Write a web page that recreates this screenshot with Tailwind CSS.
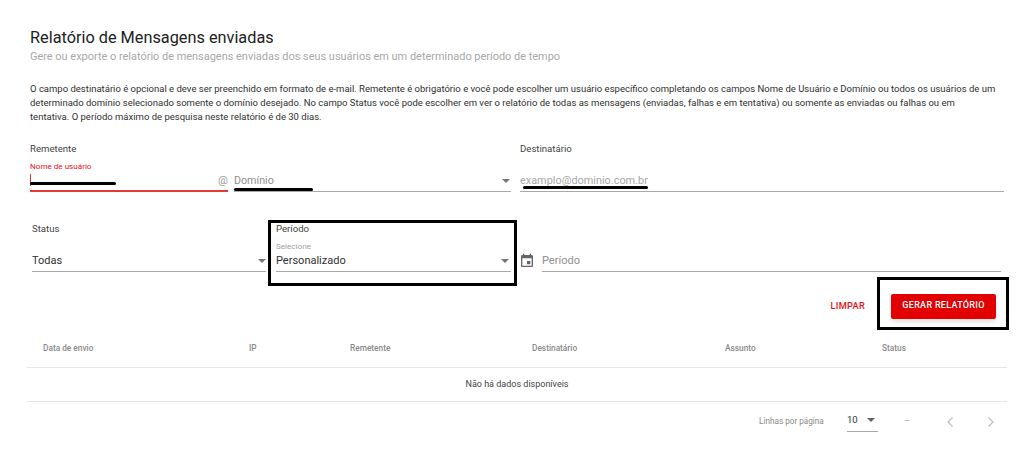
<!DOCTYPE html>
<html lang="pt-BR">
<head>
  <meta charset="UTF-8" />
  <meta name="viewport" content="width=device-width, initial-scale=1.0" />
  <title>Relatório de Mensagens enviadas</title>
  <script src="https://cdn.jsdelivr.net/npm/@tailwindcss/browser@4"></script>
</head>
<body class="bg-white text-[#212121] font-['Roboto',sans-serif] antialiased">
  <div class="relative w-[1024px] h-[450px] overflow-hidden">

    <!-- Header -->
    <div class="pl-[30px] pr-[20px] pt-[28px]">
      <h1 class="text-[16.3px] leading-[20px] text-[#212121]">Relatório de Mensagens enviadas</h1>
      <p class="text-[10.95px] leading-[18px] text-[#a8a8a8]">Gere ou exporte o relatório de mensagens enviadas dos seus usuários em um determinado período de tempo</p>
      <p class="text-[9.5px] leading-[14px] mt-[16px] text-[#303030]">O campo destinatário é opcional e deve ser preenchido em formato de e-mail. Remetente é obrigatório e você pode escolher um usuário específico completando os campos Nome de Usuário e Domínio ou todos os usuários de um determinado domínio selecionado somente o domínio desejado. No campo Status você pode escolher em ver o relatório de todas as mensagens (enviadas, falhas e em tentativa) ou somente as enviadas ou falhas ou em<br />tentativa. O período máximo de pesquisa neste relatório é de 30 dias.</p>
    </div>

    <!-- Remetente / Destinatário -->
    <div class="flex pl-[30px] mt-[17.5px]">
      <div class="w-[490px] shrink-0">
        <div class="text-[9.6px] leading-[14px] text-[#444]">Remetente</div>
        <div class="flex mt-[2px]">
          <div class="w-[198px] h-[34px] pt-[2px] border-b-2 border-[#e53935] relative">
            <div class="text-[8.1px] leading-[12px] text-[#e8101a]">Nome de usuário</div>
            <div class="w-px h-[12px] bg-[#e53935] mt-[2px]"></div>
            <span class="absolute right-0 top-[15px] text-[11px] leading-[16px] text-[#9a9a9a]">@</span>
          </div>
          <div class="w-[277px] h-[34px] ml-[6px] border-b border-[#a9a9a9] flex items-end justify-between pb-[2px]">
            <span class="text-[10.7px] leading-[16px] text-[#8f8f8f]">Domínio</span>
            <span class="w-0 h-0 mr-[1px] mb-[6px] border-x-[4px] border-x-transparent border-t-[4px] border-t-[#757575]"></span>
          </div>
        </div>
      </div>
      <div class="w-[484px] shrink-0">
        <div class="text-[9.6px] leading-[14px] text-[#444]">Destinatário</div>
        <div class="h-[34px] mt-[2px] border-b border-[#a9a9a9] flex items-end pb-[2px]">
          <span class="text-[10.9px] leading-[16px] text-[#a8a8a8]">examplo@dominio.com.br</span>
        </div>
      </div>
    </div>

    <!-- Status / Período -->
    <div class="flex pl-[32px] mt-[30px]">
      <div class="w-[234px] shrink-0">
        <div class="text-[9.6px] leading-[14px] text-[#444]">Status</div>
        <div class="h-[36px] pt-[16px] border-b border-[#a9a9a9] flex items-start justify-between">
          <span class="text-[11px] leading-[18px] text-[#303030]">Todas</span>
          <span class="w-0 h-0 mt-[7px] border-x-[4px] border-x-transparent border-t-[4px] border-t-[#757575]"></span>
        </div>
      </div>
      <div class="w-[235px] shrink-0 ml-[10px]">
        <div class="text-[9.6px] leading-[14px] text-[#444]">Período</div>
        <div class="h-[36px] border-b border-[#a9a9a9] relative flex items-start justify-between pt-[16px]">
          <span class="absolute left-0 top-[4px] text-[8.1px] leading-[12px] text-[#a0a0a0]">Selecione</span>
          <span class="text-[11px] leading-[18px] text-[#303030]">Personalizado</span>
          <span class="w-0 h-0 mt-[7px] mr-[2px] border-x-[4px] border-x-transparent border-t-[4px] border-t-[#757575]"></span>
        </div>
      </div>
      <div class="ml-[10px] flex items-end h-[50px]">
        <svg class="w-[16px] h-[16px] mb-[3px] -ml-[2px]" viewBox="0 0 24 24" fill="#666"><path d="M19 3h-1V1h-2v2H8V1H6v2H5c-1.1 0-2 .9-2 2v14c0 1.1.9 2 2 2h14c1.1 0 2-.9 2-2V5c0-1.1-.9-2-2-2zm0 16H5V8h14v11zM12 12h5v5h-5z"/></svg>
        <div class="w-[459px] ml-[7px] h-[36px] pt-[16px] border-b border-[#a9a9a9]">
          <span class="block text-[11px] leading-[18px] text-[#8f8f8f]">Período</span>
        </div>
      </div>
    </div>

    <!-- Actions -->
    <div class="flex justify-end items-center pr-[28px] mt-[22px]">
      <span class="text-[9.2px] font-medium tracking-[0.3px] text-[#e8101a]">LIMPAR</span>
      <button class="ml-[26px] w-[105px] h-[25px] rounded-[2px] bg-[#e30000] text-white text-[9px] font-medium tracking-[0.3px] shadow-md">GERAR RELATÓRIO</button>
    </div>

    <!-- Tabela -->
    <div class="ml-[27px] w-[980px] mt-[10px]">
      <div class="grid grid-cols-[206px_101px_182px_193px_157px_1fr] pl-[16px] pt-[2px] h-[39px] items-center border-b border-[#e6e6e6] text-[8.3px] font-medium text-[#8a8a8a]">
        <span>Data de envio</span>
        <span>IP</span>
        <span>Remetente</span>
        <span>Destinatário</span>
        <span>Assunto</span>
        <span>Status</span>
      </div>
      <div class="h-[34px] pt-[2px] flex items-center justify-center border-b border-[#e6e6e6] text-[9px] text-[#444]">Não há dados disponíveis</div>
    </div>

    <!-- Paginação -->
    <div class="flex items-center ml-[759px] h-[40px]">
      <span class="text-[8.2px] text-[#8a8a8a] w-[88px]">Linhas por página</span>
      <div class="w-[31px] h-[21px] border-b border-[#a9a9a9] flex items-start justify-between pt-[3px] pr-[3px]">
        <span class="text-[9.5px] leading-[12px] text-[#303030]">10</span>
        <span class="w-0 h-0 mt-[4px] border-x-[4px] border-x-transparent border-t-[4px] border-t-[#616161]"></span>
      </div>
      <span class="ml-[26px] text-[9px] text-[#a8a8a8]">–</span>
      <svg class="w-[8px] h-[12px] ml-[36px]" viewBox="0 0 8 12" fill="none" stroke="#bdbdbd" stroke-width="1.2"><path d="M6.5 1.5 2 6l4.5 4.5"/></svg>
      <svg class="w-[8px] h-[12px] ml-[33px]" viewBox="0 0 8 12" fill="none" stroke="#bdbdbd" stroke-width="1.2"><path d="M1.5 1.5 6 6l-4.5 4.5"/></svg>
    </div>

    <!-- Anotações sobre a captura -->
    <div class="absolute left-[268px] top-[220px] w-[249px] h-[66px] border-[3px] border-black"></div>
    <div class="absolute left-[877px] top-[277px] w-[132px] h-[53px] border-[3px] border-black"></div>
    <div class="absolute left-[30px] top-[182px] w-[86px] h-[3px] rounded-full bg-black"></div>
    <div class="absolute left-[234px] top-[188px] w-[79px] h-[2.5px] rounded-full bg-black"></div>
    <div class="absolute left-[523px] top-[186px] w-[125px] h-[2.5px] rounded-full bg-black"></div>
  </div>
</body>
</html>
